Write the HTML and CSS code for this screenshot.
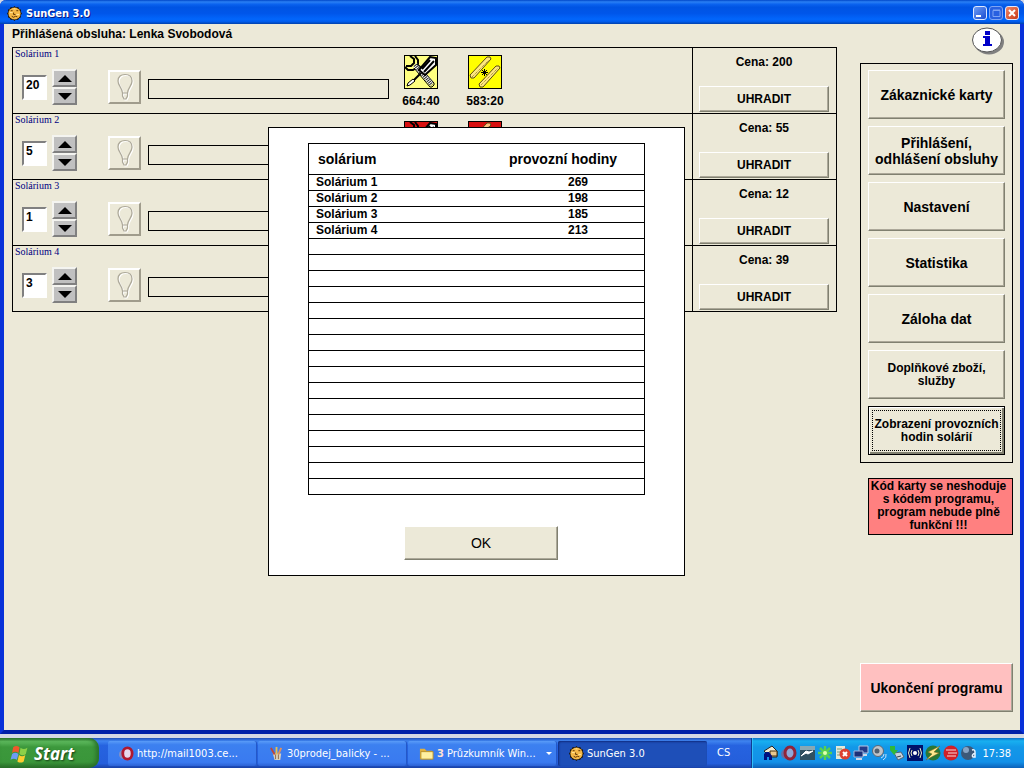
FILE: index.html
```html
<!DOCTYPE html>
<html lang="cs">
<head>
    <meta charset="UTF-8">
    <meta name="viewport" content="width=device-width, initial-scale=1.0">
    <title>SunGen 3.0</title>
    <link rel="stylesheet" href="styles.css">
</head>
<body>
    <svg class="sprite" aria-hidden="true">
        <symbol id="sun" viewBox="0 0 16 16">
            <path d="M8 0l1.500 1.500L12 1l.8 2 2.200 1-.3 2L16 8l-1.500 2 .5 2-2.200 1-1 2-2.300-.5L8 16l-1.800-1.500L4 15l-1-2-2-1 .3-2L0 8l1.300-2L1 4l2-1 1-2 2.300.5z" fill="#1c1204"/>
            <circle cx="8" cy="8" r="6.500" fill="#f4b848"/>
            <path d="M4 5h2M10 5h2M7 7v2h2M5 11l2 1 2-1 2 .5" stroke="#5a3000" fill="none"/>
            <path d="M7 3h2M3 7h3M10 9h3" stroke="#ffe9a0"/>
        </symbol>
        <symbol id="bulb" viewBox="0 0 20 28">
            <path d="M7.500 20C7 14 3 13 3 8c0-4.500 3-6.500 7-6.500S17 3.500 17 8c0 5-4 6-4.500 12zM7.500 20v3l1.500 3h2l1.500-3v-3" fill="none" stroke="#fff" stroke-width="1.200" transform="translate(1 1)"/>
            <path d="M7.500 20C7 14 3 13 3 8c0-4.500 3-6.500 7-6.500S17 3.500 17 8c0 5-4 6-4.500 12zM7.500 20v3l1.500 3h2l1.500-3v-3" fill="none" stroke="#aca899" stroke-width="1.200"/>
        </symbol>
        <symbol id="tools" viewBox="0 0 32 32">
            <path d="M5 0l4 3v4L6 10H1M10 0l3 4v5l3 3M0 11l3 3h5l3-2" fill="none" stroke="#000" stroke-width="2"/>
            <path d="M10 9l17 19" stroke="#fff" stroke-width="5"/>
            <path d="M12 8l17 19v2l-2 2h-2L9 12" fill="none" stroke="#000"/>
            <path d="M10 9l17 20" stroke="#222" stroke-width="4" stroke-dasharray="1 1"/>
            <path d="M14 14L25 1l6 1v7L20 19z" fill="#fff" stroke="#000" stroke-width="2"/>
            <path d="M17 13l8-9M19 16L29 5M16 17L8 25" stroke="#000" stroke-width="2"/>
            <path d="M8 23l2 2-5 4-3 1 1-3z" fill="#fff" stroke="#000"/>
        </symbol>
        <symbol id="tubes" viewBox="0 0 32 32">
            <g stroke="#5a4a10">
                <path d="M1 19L18 1h3l1 2L5 22H2z"/>
                <path d="M10 28L27 10h3l1 2-17 19h-3z"/>
            </g>
            <path d="M3 21L20 4M12 29L29 12" stroke="#8a7a20" stroke-dasharray="1 1"/>
            <path d="M15.500 13v7M12 16.500h7M13 14l5 5M18 14l-5 5" stroke="#000"/>
        </symbol>
    </svg>

    <div class="window">
        <header class="titlebar">
            <svg class="app-icon"><use href="#sun"/></svg>
            <h1>SunGen 3.0</h1>
            <div class="window-btns">
                <button class="win-btn" aria-label="Minimalizovat"><svg viewBox="0 0 12 12"><path d="M2 9h5" stroke="#fff" stroke-width="2"/></svg></button>
                <button class="win-btn win-max" aria-label="Maximalizovat" disabled><svg viewBox="0 0 12 12"><path d="M3 3.500h7v6H3zM3 3h7" fill="none" stroke="#7ea4f4"/></svg></button>
                <button class="win-btn win-close" aria-label="Zavřít"><svg viewBox="0 0 12 12"><path d="M3 3l6 6M9 3L3 9" stroke="#fff" stroke-width="2"/></svg></button>
            </div>
        </header>

        <div class="client">
            <main class="main">
                <p class="operator">Přihlášená obsluha: Lenka Svobodová</p>
                <div class="beds">
                    <section class="bed">
                        <div class="bed-info">
                            <label class="bed-name" for="bed1">Solárium 1</label>
                            <div class="bed-controls">
                                <input class="minutes" id="bed1" type="text" value="20">
                                <div class="spin">
                                    <button aria-label="Více"><span class="up"></span></button>
                                    <button aria-label="Méně"><span class="down"></span></button>
                                </div>
                                <button class="lamp" aria-label="Světlo"><svg><use href="#bulb"/></svg></button>
                                <div class="bar"></div>
                            </div>
                        </div>
                        <div class="timers">
                            <div class="timer"><svg class="ico-tools"><use href="#tools"/></svg>664:40</div>
                            <div class="timer"><svg class="ico-tubes"><use href="#tubes"/></svg>583:20</div>
                        </div>
                        <div class="pay"><span>Cena: 200</span><button class="btn">UHRADIT</button></div>
                    </section>
                    <section class="bed">
                        <div class="bed-info">
                            <label class="bed-name" for="bed2">Solárium 2</label>
                            <div class="bed-controls">
                                <input class="minutes" id="bed2" type="text" value="5">
                                <div class="spin">
                                    <button aria-label="Více"><span class="up"></span></button>
                                    <button aria-label="Méně"><span class="down"></span></button>
                                </div>
                                <button class="lamp" aria-label="Světlo"><svg><use href="#bulb"/></svg></button>
                                <div class="bar"></div>
                            </div>
                        </div>
                        <div class="timers">
                            <div class="timer"><svg class="ico-tools over"><use href="#tools"/></svg></div>
                            <div class="timer"><svg class="ico-tubes over"><use href="#tubes"/></svg></div>
                        </div>
                        <div class="pay"><span>Cena: 55</span><button class="btn">UHRADIT</button></div>
                    </section>
                    <section class="bed">
                        <div class="bed-info">
                            <label class="bed-name" for="bed3">Solárium 3</label>
                            <div class="bed-controls">
                                <input class="minutes" id="bed3" type="text" value="1">
                                <div class="spin">
                                    <button aria-label="Více"><span class="up"></span></button>
                                    <button aria-label="Méně"><span class="down"></span></button>
                                </div>
                                <button class="lamp" aria-label="Světlo"><svg><use href="#bulb"/></svg></button>
                                <div class="bar"></div>
                            </div>
                        </div>
                        <div class="timers"></div>
                        <div class="pay"><span>Cena: 12</span><button class="btn">UHRADIT</button></div>
                    </section>
                    <section class="bed">
                        <div class="bed-info">
                            <label class="bed-name" for="bed4">Solárium 4</label>
                            <div class="bed-controls">
                                <input class="minutes" id="bed4" type="text" value="3">
                                <div class="spin">
                                    <button aria-label="Více"><span class="up"></span></button>
                                    <button aria-label="Méně"><span class="down"></span></button>
                                </div>
                                <button class="lamp" aria-label="Světlo"><svg><use href="#bulb"/></svg></button>
                                <div class="bar"></div>
                            </div>
                        </div>
                        <div class="timers"></div>
                        <div class="pay"><span>Cena: 39</span><button class="btn">UHRADIT</button></div>
                    </section>
                </div>
            </main>

            <aside class="sidebar">
                <button class="info" aria-label="Informace">
                    <svg viewBox="0 0 32 28">
                        <ellipse cx="17" cy="15" rx="15" ry="12.500" fill="#808080"/>
                        <ellipse cx="15" cy="13" rx="14.500" ry="12" fill="#fff" stroke="#555"/>
                        <path d="M13 4h5v4h-5zM11 9h7v8h2v2h-9v-2h2v-6h-2z" fill="#0000c8"/>
                    </svg>
                </button>
                <nav class="menu">
                    <button class="btn">Zákaznické karty</button>
                    <button class="btn">Přihlášení,<br>odhlášení obsluhy</button>
                    <button class="btn">Nastavení</button>
                    <button class="btn">Statistika</button>
                    <button class="btn">Záloha dat</button>
                    <button class="btn small">Doplňkové zboží,<br>služby</button>
                    <button class="btn small focused"><span>Zobrazení provozních<br>hodin solárií</span></button>
                </nav>
                <p class="warning">Kód karty se neshoduje<br>s kódem programu,<br>program nebude plně<br>funkční !!!</p>
                <button class="btn quit">Ukončení programu</button>
            </aside>

            <div class="dialog" role="dialog">
                <table class="hours">
                    <thead>
                        <tr><th>solárium</th><th>provozní hodiny</th></tr>
                    </thead>
                    <tbody>
                        <tr><td>Solárium 1</td><td>269</td></tr>
                        <tr><td>Solárium 2</td><td>198</td></tr>
                        <tr><td>Solárium 3</td><td>185</td></tr>
                        <tr><td>Solárium 4</td><td>213</td></tr>
                        <tr><td></td><td></td></tr>
                        <tr><td></td><td></td></tr>
                        <tr><td></td><td></td></tr>
                        <tr><td></td><td></td></tr>
                        <tr><td></td><td></td></tr>
                        <tr><td></td><td></td></tr>
                        <tr><td></td><td></td></tr>
                        <tr><td></td><td></td></tr>
                        <tr><td></td><td></td></tr>
                        <tr><td></td><td></td></tr>
                        <tr><td></td><td></td></tr>
                        <tr><td></td><td></td></tr>
                        <tr><td></td><td></td></tr>
                        <tr><td></td><td></td></tr>
                        <tr><td></td><td></td></tr>
                        <tr><td></td><td></td></tr>
                    </tbody>
                </table>
                <button class="btn ok">OK</button>
            </div>
        </div>
    </div>

    <footer class="taskbar">
        <button class="start">
            <svg viewBox="0 0 18 18">
                <path d="M3 3c2-1.500 4-1.500 6 0L8 8.500c-2-1.500-4-1.500-6 0z" fill="#f0582c"/>
                <path d="M10 3.500c2 1.500 4 1.500 6.500 0l-1.500 6c-2 1.500-4 1.500-6 0z" fill="#8cd048"/>
                <path d="M2 9.500c2-1.500 4-1.500 6 0L6.500 15c-2-1.500-4-1.500-6 0z" fill="#6c9cf4"/>
                <path d="M8.500 10.500c2 1.500 4 1.500 6 0L13 16.500c-2 1.500-4 1.500-6 0z" fill="#fccc30"/>
            </svg>
            Start
        </button>
        <div class="tasks">
            <button class="task">
                <svg viewBox="0 0 16 16"><ellipse cx="5" cy="9" rx="5" ry="5" fill="#8090c8"/><ellipse cx="9" cy="8" rx="5" ry="6" fill="#e8d8ec" stroke="#b01830" stroke-width="3"/></svg>
                <span>http://mail1003.ce...</span>
            </button>
            <button class="task">
                <svg viewBox="0 0 16 16"><path d="M4 8h9l-1 7H6z" fill="#d8d0c0"/><path d="M6 9L2 2" stroke="#c04838" stroke-width="2"/><path d="M8 9V1" stroke="#e8c050" stroke-width="2"/><path d="M10 9l3-7" stroke="#e0905c" stroke-width="2"/><path d="M7 9v5M10 9v5" stroke="#906848"/></svg>
                <span>30prodej_balicky - ...</span>
            </button>
            <button class="task">
                <svg viewBox="0 0 16 16"><path d="M1 3h5l2 2h6v9H1z" fill="#e0b040"/><path d="M2 6h13v8H2z" fill="#fff0a0" stroke="#b89028"/></svg>
                <span><b>3</b> Průzkumník Win...</span>
                <i class="caret"></i>
            </button>
            <button class="task active">
                <svg><use href="#sun"/></svg>
                <span>SunGen 3.0</span>
            </button>
        </div>
        <span class="lang">CS</span>
        <div class="tray">
            <svg viewBox="0 0 16 16"><path d="M1 6l8-5 5 5v6H7z" fill="#f4ecd0" stroke="#222"/><path d="M7 6h7v5H7z" fill="#e8c890" stroke="#443010"/><path d="M1 15V9l2-2h3l3 4v4H6v-3H4v3z" fill="#001080"/></svg>
            <svg viewBox="0 0 16 16"><ellipse cx="5" cy="9" rx="5" ry="5" fill="#6070a8"/><ellipse cx="9" cy="8" rx="5" ry="6" fill="#90a8d8" stroke="#902438" stroke-width="3"/></svg>
            <svg viewBox="0 0 16 16"><path d="M1 1h15v14H1z" fill="#305060"/><path d="M1 1h15v4H1z" fill="#88a8b4"/><path d="M2 11l5-3 2 1 5-3-4 1-3-1z" fill="#fff" stroke="#fff"/></svg>
            <svg viewBox="0 0 16 16"><path d="M8 1v14M1 8h14M3 3l10 10M13 3L3 13" stroke="#58d050" stroke-width="2.500"/><circle cx="8" cy="8" r="2" fill="#e0ffb0"/></svg>
            <svg viewBox="0 0 16 16"><path d="M1 1h9v13H1z" fill="#e4e8d8"/><path d="M2 4h5M2 7h4M2 10h4" stroke="#78a078"/><circle cx="10" cy="9" r="5.500" fill="#dc4030"/><path d="M8 7l4 4M12 7l-4 4" stroke="#fff" stroke-width="2"/></svg>
            <svg viewBox="0 0 16 16"><path d="M6 1h9v7H6z" fill="#243c88" stroke="#b8c8e4"/><path d="M1 6h9v6H1z" fill="#1c3078" stroke="#a0b4dc"/><path d="M3 14h6M10 10h4" stroke="#d0d8e8" stroke-width="2"/></svg>
            <svg viewBox="0 0 16 16"><circle cx="7" cy="6" r="5.500" fill="#c0c4c8" stroke="#586878"/><circle cx="6" cy="6" r="2.500" fill="#506070"/><path d="M10 13q3-1 3-4M12 15q4-2 3-6" stroke="#c8e0f8" fill="none"/></svg>
            <svg viewBox="0 0 16 16"><path d="M5 8l7-1 3 5-6 3z" fill="#c8d4dc" stroke="#506478"/><path d="M8 12l4-1" stroke="#304050"/><path d="M1 1h5v4h3L5 10 1 5z" fill="#30b838"/></svg>
            <svg viewBox="0 0 16 16"><path d="M0 0h16v16H0z" fill="#001068"/><circle cx="8" cy="8" r="2" fill="#fff"/><path d="M5 5q-2 3 0 6M11 5q2 3 0 6M3 3q-3 5 0 10M13 3q3 5 0 10" fill="none" stroke="#f0f0c0"/></svg>
            <svg viewBox="0 0 16 16"><circle cx="8" cy="8" r="7.500" fill="#287838"/><path d="M15 1L3 7l4 2-6 6 13-7-5-1z" fill="#ffe890" stroke="#806010" stroke-width=".5"/></svg>
            <svg viewBox="0 0 16 16"><circle cx="8" cy="8" r="7.500" fill="#d02028"/><path d="M3 5h10M5 8h9M4 11h9" stroke="#f8d8d8"/></svg>
            <svg viewBox="0 0 16 16"><circle cx="7" cy="8" r="7" fill="#3c5878"/><circle cx="5" cy="5" r="3" fill="#88a4c4"/><path d="M11 5q3-1 3 2v5h-2q-2-2 2-4" stroke="#e8f4ff" stroke-width="1.500" fill="none"/></svg>
            <time>17:38</time>
        </div>
    </footer>
</body>
</html>
```
FILE: styles.css
```css
* {
    box-sizing: border-box;
}
body {
    margin: 0;
    height: 100vh;
    display: flex;
    flex-direction: column;
    background-color: #d4d8e4;
    color: #000;
    font-family: "Liberation Sans", Arial, sans-serif;
    font-size: 12px;
    font-weight: bold;
}
p, h1 {
    margin: 0;
}
button, input {
    font: inherit;
    color: inherit;
    padding: 0;
    border-radius: 0;
}
svg {
    display: block;
    flex: none;
}
.sprite {
    position: absolute;
    width: 0;
    height: 0;
}

/* window frame */
.window {
    flex: 1;
    display: flex;
    flex-direction: column;
    margin-bottom: 4px;
    border: solid #0831d9;
    border-width: 0 4px 4px;
    border-bottom-color: #0020a8;
    background-color: #ece9d8;
    border-radius: 6px 6px 0 0;
}
.titlebar {
    display: flex;
    align-items: center;
    height: 24px;
    margin: 0 -4px;
    padding: 2px 5px 0 7px;
    border-radius: 6px 6px 0 0;
    background: linear-gradient(#0046c8, #2a80f4 8%, #0a62ee 18%, #0054e3 30%, #0056ea 56%, #0266fc 80%, #005cec 90%, #0040ab);
}
.app-icon {
    width: 15px;
    height: 15px;
}
.titlebar h1 {
    flex: 1;
    margin-left: 4px;
    font-family: "DejaVu Sans Condensed", "DejaVu Sans", sans-serif;
    font-size: 11px;
    color: #fff;
    text-shadow: 1px 1px #0a1883;
}
.window-btns {
    display: flex;
    gap: 2px;
}
.win-btn {
    width: 14px;
    height: 14px;
    border: 1px solid #dfe8ff;
    border-radius: 3px;
    background: linear-gradient(135deg, #6c9cf4, #1c4cd0);
}
.win-btn svg {
    width: 12px;
    height: 12px;
}
.win-max {
    border-color: #7ea4f4;
    background: #2860e0;
}
.win-close {
    background: linear-gradient(135deg, #f08868, #c83818);
}

.client {
    flex: 1;
    display: flex;
    position: relative;
    padding: 0 7px 18px 8px;
}
.main {
    flex: 1;
}
.operator {
    height: 23px;
    line-height: 20px;
}

/* raised button */
.btn {
    border: 1px solid;
    border-color: #fff #808070 #808070 #fff;
    box-shadow: inset -1px -1px #aca899;
    outline: none;
    background-color: #ece9d8;
}

/* solarium rows */
.beds {
    border: 1px solid #000;
    border-top: none;
}
.bed {
    display: flex;
    height: 66px;
    border-top: 1px solid #000;
}
.bed-info {
    width: 376px;
}
.bed-name {
    display: block;
    height: 20px;
    padding-left: 2px;
    font: 10px/12px "Liberation Serif", "Times New Roman", serif;
    color: #000080;
}
.bed-controls {
    display: flex;
    align-items: center;
    height: 38px;
    padding-left: 9px;
}
.minutes {
    width: 25px;
    height: 25px;
    padding: 0 0 4px 2px;
    border: 2px solid;
    border-color: #808080 #fff #fff #808080;
    background-color: #fff;
}
.spin {
    display: flex;
    flex-direction: column;
    margin-left: 5px;
}
.spin button {
    display: flex;
    align-items: center;
    justify-content: center;
    width: 25px;
    height: 18px;
    border: 2px solid;
    border-color: #f4f4f0 #808080 #808080 #f4f4f0;
    background-color: #c0c0c0;
}
.up, .down {
    border: 7px solid transparent;
    border-top-width: 0;
    border-bottom: 7px solid #000;
}
.down {
    border-bottom-width: 0;
    border-top: 7px solid #000;
}
.lamp {
    display: flex;
    align-items: center;
    justify-content: center;
    width: 33px;
    height: 34px;
    margin-left: 31px;
    border: 2px solid;
    border-color: #fff #a09c8c #a09c8c #fff;
    background-color: #ece9d8;
}
.lamp svg {
    width: 20px;
    height: 28px;
}
.bar {
    flex: 1;
    height: 20px;
    margin-left: 7px;
    margin-top: 4px;
    border: 1px solid #000;
}
.timers {
    flex: 1;
    display: flex;
    padding-top: 7px;
}
.timer {
    display: flex;
    flex-direction: column;
    align-items: center;
    gap: 5px;
    width: 64px;
}
.timer svg {
    width: 34px;
    height: 34px;
    border: 1px solid #000;
}
.ico-tools {
    background-color: #ffff80;
}
.ico-tubes {
    background-color: #ffff00;
    fill: #ffe880;
}
.timer .over {
    background-color: #d81010;
    fill: #ffc080;
}
.pay {
    display: flex;
    flex-direction: column;
    align-items: center;
    justify-content: space-between;
    width: 144px;
    padding: 7px 7px 1px 6px;
    border-left: 1px solid #000;
}
.pay .btn {
    width: 100%;
    height: 26px;
}

/* right column */
.sidebar {
    display: flex;
    flex-direction: column;
    width: 153px;
    margin-left: 23px;
}
.info {
    align-self: flex-end;
    width: 32px;
    height: 28px;
    margin: 3px 9px 8px 0;
    border: none;
    background: none;
}
.menu {
    display: flex;
    flex-direction: column;
    gap: 7px;
    padding: 6px 7px 7px;
    border: 1px solid #000;
}
.menu .btn {
    height: 49px;
    font-size: 14px;
    line-height: 16px;
}
.menu .small {
    font-size: 12px;
    line-height: 13px;
}
.menu .focused {
    padding: 1px;
    border: 1px solid #000;
    box-shadow: inset 1px 1px #fff, inset -2px -2px #808070;
}
.focused span {
    display: flex;
    align-items: center;
    justify-content: center;
    height: 41px;
    margin: 0 2px;
    border: 1px dotted #000;
    white-space: nowrap;
}
.warning {
    margin: 15px 0 0 8px;
    padding: 1px 4px 2px 0;
    border: 1px solid #000;
    background-color: #ff8080;
    line-height: 13px;
    text-align: center;
    white-space: nowrap;
}
.quit {
    height: 49px;
    margin-top: auto;
    background-color: #ffc0c0;
    font-size: 14px;
}

/* operating hours dialog */
.dialog {
    position: absolute;
    left: 264px;
    top: 103px;
    width: 417px;
    padding: 15px 39px;
    border: 1px solid #000;
    background-color: #fff;
}
.hours {
    width: 100%;
    border: 1px solid #000;
    border-collapse: collapse;
    table-layout: fixed;
}
.hours th {
    height: 31px;
    padding: 0 0 0 9px;
    font-size: 14px;
    text-align: left;
}
.hours th:first-child {
    width: 57%;
}
.hours td {
    height: 16px;
    padding: 0 7px;
    border-top: 1px solid #000;
    line-height: 15px;
}
.hours td + td {
    padding-right: 56px;
    text-align: right;
}
.ok {
    display: block;
    width: 154px;
    height: 34px;
    margin: 31px 87px 0 auto;
    font-size: 14px;
    font-weight: normal;
}

/* taskbar */
.taskbar {
    display: flex;
    align-items: stretch;
    height: 30px;
    background: linear-gradient(#1f4fb8, #3f84f0 10%, #2663e0 25%, #245edb 85%, #1941a5);
    color: #fff;
    font-family: "DejaVu Sans Condensed", "DejaVu Sans", sans-serif;
    font-size: 11px;
    font-weight: normal;
}
.start {
    display: flex;
    align-items: center;
    gap: 5px;
    width: 99px;
    padding-left: 10px;
    border: none;
    border-radius: 0 10px 10px 0;
    background: linear-gradient(#2c7c2c, #5cb85c 12%, #3c983c 30%, #3a963a 80%, #286c28);
    box-shadow: inset -3px 0 4px #2a702a;
    font: italic bold 17px "Open Sans", sans-serif;
    text-shadow: 1px 1px 2px #143c14;
}
.start svg {
    width: 19px;
    height: 19px;
}
.tasks {
    display: flex;
    gap: 1px;
    padding: 3px 0 2px 9px;
}
.task {
    display: flex;
    align-items: center;
    gap: 3px;
    width: 149px;
    padding: 0 5px 0 11px;
    border: none;
    border-radius: 2px;
    background: linear-gradient(#5a9cf8, #3c80f0 15%, #3a7af0 85%, #2c62d4);
    box-shadow: inset -1px 0 #2458c8;
    white-space: nowrap;
}
.task svg {
    width: 15px;
    height: 15px;
}
.task b {
    color: #ffe0d0;
}
.task.active {
    background: #1e4fb8;
    box-shadow: inset 1px 1px 2px #102c80;
}
.caret {
    margin-left: auto;
    border: 3px solid transparent;
    border-top-color: #fff;
    border-bottom-width: 0;
}
.lang {
    margin-left: 10px;
    line-height: 30px;
}
.tray {
    display: flex;
    align-items: center;
    gap: 2px;
    margin-left: auto;
    padding: 0 13px 0 11px;
    border-left: 1px solid #103c90;
    background: linear-gradient(#0c70c8, #18b0f0 10%, #1298e8 30%, #1290e8 80%, #0c60b8);
    box-shadow: inset 1px 0 #30c0f8;
}
.tray svg {
    width: 16px;
    height: 16px;
}
.tray time {
    margin-left: 3px;
}
```
